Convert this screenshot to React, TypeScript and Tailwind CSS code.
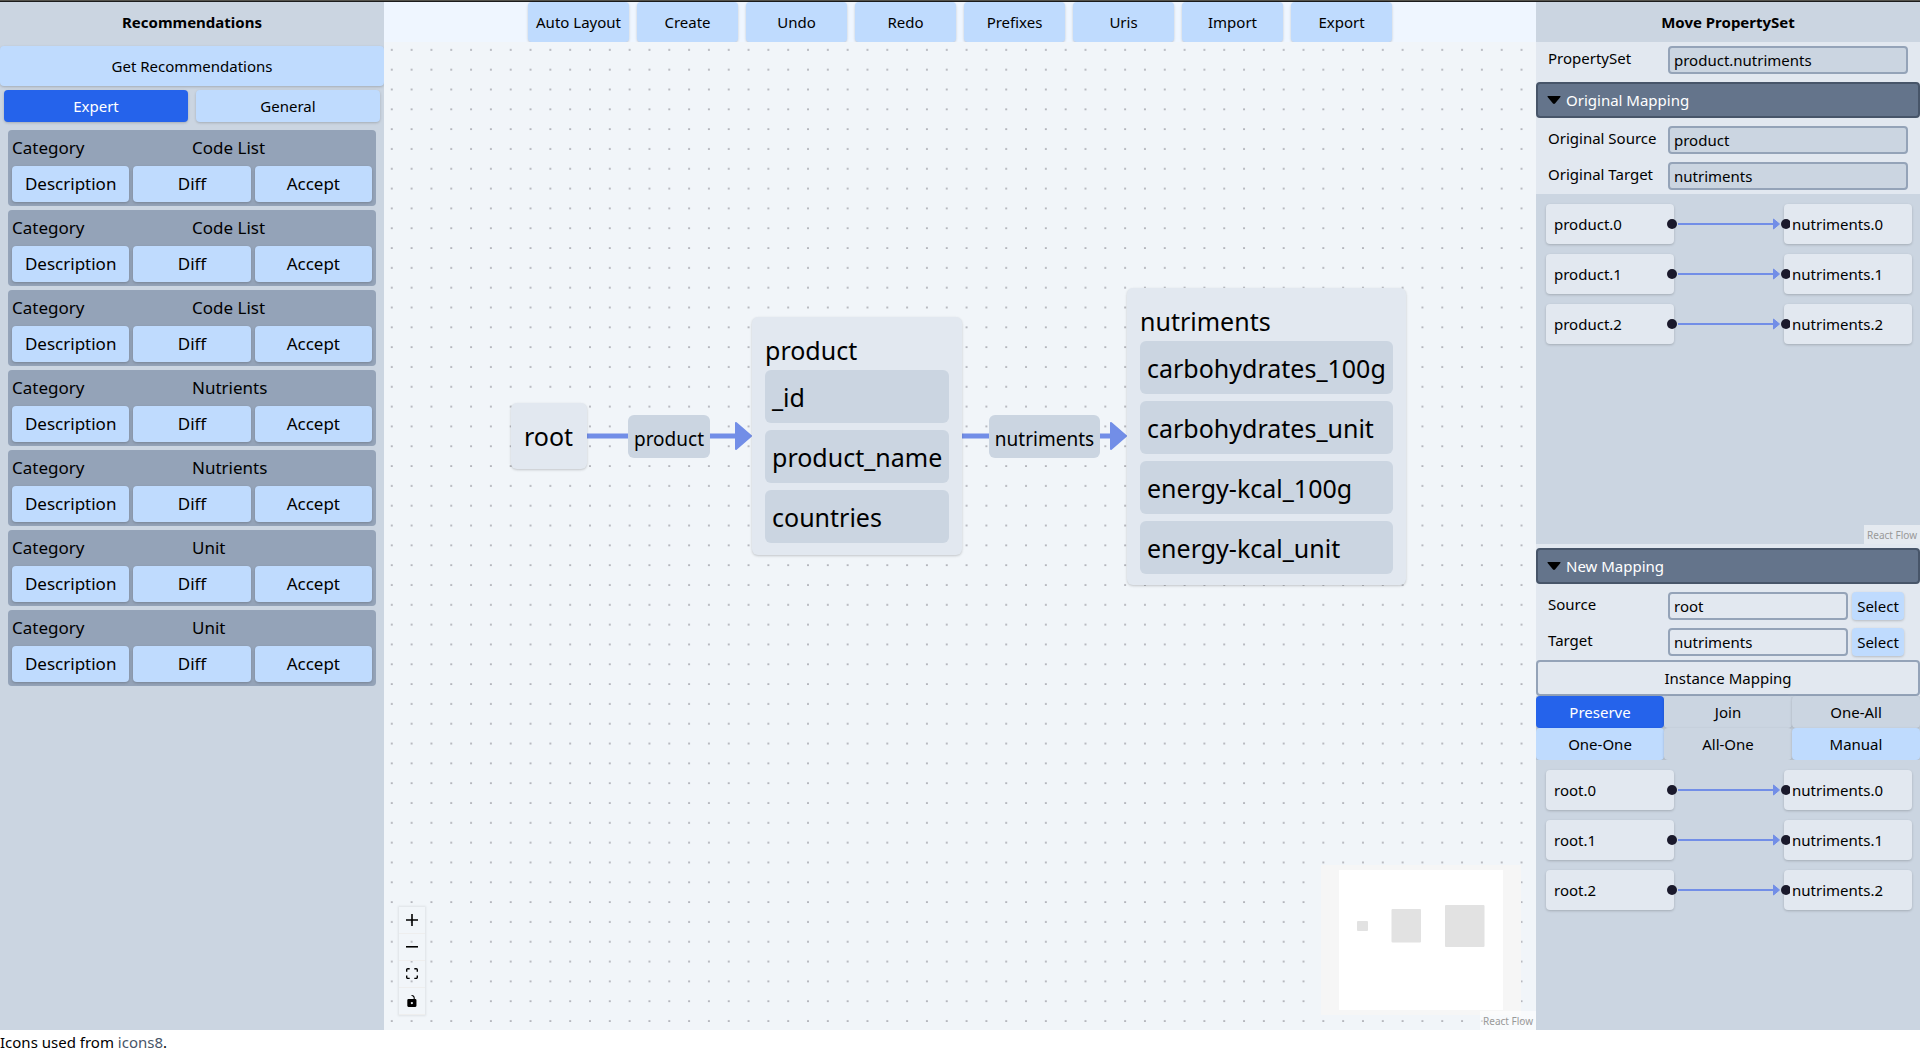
import React, { useState } from "react";

const shadow = "shadow-[0_1px_3px_rgba(0,0,0,0.12),0_1px_2px_rgba(0,0,0,0.08)]";

function SideRecommendations() {
  const [tab, setTab] = useState("Expert");
  const items = ["Code List", "Code List", "Code List", "Nutrients", "Nutrients", "Unit", "Unit"];
  return (
    <aside className="flex w-1/5 flex-col bg-[#cbd5e1]">
      <h2 className="flex h-10 items-center justify-center font-bold">Recommendations</h2>
      <button className={`mt-1 h-10 rounded bg-[#bfdbfe] ${shadow}`}>Get Recommendations</button>
      <div className="mt-1 grid grid-cols-2 gap-2 px-1">
        {["Expert", "General"].map((t) => (
          <button
            key={t}
            onClick={() => setTab(t)}
            className={`h-8 rounded ${shadow} ${tab === t ? "bg-[#2563eb] text-white" : "bg-[#bfdbfe]"}`}
          >
            {t}
          </button>
        ))}
      </div>
      <ul className="mt-2 flex flex-col gap-1 px-2 text-[17px]">
        {items.map((value, i) => (
          <li key={i} className="rounded bg-[#94a3b8] p-1">
            <div className="mb-1 grid h-7 grid-cols-2 items-center">
              <span>Category</span>
              <span>{value}</span>
            </div>
            <div className="grid grid-cols-3 gap-1">
              {["Description", "Diff", "Accept"].map((b) => (
                <button key={b} className={`h-9 rounded bg-[#bfdbfe] ${shadow}`}>
                  {b}
                </button>
              ))}
            </div>
          </li>
        ))}
      </ul>
    </aside>
  );
}

function EntityNode({ place, title, fields }: { place: string; title: string; fields: string[] }) {
  return (
    <div className={`absolute rounded-md bg-[#e2e8f0] text-[25px] whitespace-nowrap ${shadow} ${place}`}>
      <div className="flex h-[40px] items-center">{title}</div>
      {fields.length > 0 && (
        <div className="flex flex-col gap-[7px]">
          {fields.map((f) => (
            <div key={f} className="flex h-[53px] items-center rounded-md bg-[#cbd5e1] px-[7px]">
              {f}
            </div>
          ))}
        </div>
      )}
    </div>
  );
}

function EdgeLabel({ place, text }: { place: string; text: string }) {
  return (
    <div
      className={`absolute top-[373px] flex h-[43px] items-center justify-center rounded-md bg-[#cbd5e1] pt-1 text-[19px] ${place}`}
    >
      {text}
    </div>
  );
}

function Attribution({ tone }: { tone: string }) {
  return (
    <a href="#react-flow" className={`absolute right-0 bottom-0 flex h-[19px] items-center px-[3px] text-[10px] text-[#999] ${tone}`}>
      React Flow
    </a>
  );
}

function Controls() {
  const icons = [
    {
      label: "zoom in",
      box: "0 0 32 32",
      d: "M32 18.133H18.133V32h-4.266V18.133H0v-4.266h13.867V0h4.266v13.867H32z",
    },
    { label: "zoom out", box: "0 0 32 5", d: "M0 0h32v4.2H0z" },
    {
      label: "fit view",
      box: "0 0 32 30",
      d: "M3.692 4.63c0-.53.4-.938.939-.938h5.215V0H4.708C2.13 0 0 2.054 0 4.63v5.216h3.692V4.631zM27.354 0h-5.2v3.692h5.17c.53 0 .984.4.984.939v5.215H32V4.631A4.624 4.624 0 0027.354 0zm.954 24.83c0 .532-.4.94-.939.94h-5.215v3.768h5.215c2.577 0 4.631-2.13 4.631-4.707v-5.139h-3.692v5.139zm-23.677.94c-.531 0-.939-.4-.939-.94v-5.138H0v5.139c0 2.577 2.13 4.707 4.708 4.707h5.138V25.77H4.631z",
    },
    {
      label: "toggle interactivity",
      box: "0 0 25 32",
      d: "M21.333 10.667H19.81V7.619C19.81 3.429 16.38 0 12.19 0c-4.114 1.828-1.37 2.133.305 2.438 1.676.305 4.42 2.59 4.42 5.181v3.048H3.047A3.056 3.056 0 000 13.714v15.238A3.056 3.056 0 003.048 32h18.285a3.056 3.056 0 003.048-3.048V13.714a3.056 3.056 0 00-3.048-3.047zM12.19 24.533a3.056 3.056 0 01-3.047-3.047 3.056 3.056 0 013.047-3.048 3.056 3.056 0 013.048 3.048 3.056 3.056 0 01-3.048 3.047z",
    },
  ];
  return (
    <div className="absolute bottom-[15px] left-[15px] flex w-[26px] flex-col shadow-[0_0_2px_1px_rgba(0,0,0,0.08)]">
      {icons.map((ic) => (
        <button
          key={ic.label}
          aria-label={ic.label}
          className="flex h-[27px] items-center justify-center border-b border-[#eee]"
        >
          <svg viewBox={ic.box} className="max-h-3 w-3">
            <path d={ic.d} />
          </svg>
        </button>
      ))}
    </div>
  );
}

function Graph() {
  return (
    <div className="relative flex-1 overflow-hidden bg-[#f1f5f9]">
      <svg className="absolute inset-0 h-full w-full">
        <pattern id="dots" x="6.8" y="6.8" width="19.82" height="19.82" patternUnits="userSpaceOnUse">
          <circle cx="1" cy="1" r="0.85" fill="#81818a" />
        </pattern>
        <rect width="100%" height="100%" fill="url(#dots)" />
        <g stroke="#728ee7" strokeWidth="5" fill="#728ee7">
          <path d="M203 394H356M578 394H732" />
          <path d="M352 381V407L367 394ZM727 381V407L742 394Z" strokeWidth="2" strokeLinejoin="round" />
        </g>
      </svg>
      <EntityNode place="left-[127px] top-[361px] h-[66px] w-[76px] px-[13px] pt-[13px]" title="root" fields={[]} />
      <EntityNode
        place="left-[368px] top-[275px] h-[238px] w-[210px] px-[13px] pt-[13px]"
        title="product"
        fields={["_id", "product_name", "countries"]}
      />
      <EntityNode
        place="left-[743px] top-[246px] h-[297px] w-[279px] px-[13px] pt-[13px]"
        title="nutriments"
        fields={["carbohydrates_100g", "carbohydrates_unit", "energy-kcal_100g", "energy-kcal_unit"]}
      />
      <EdgeLabel place="left-[244px] w-[82px]" text="product" />
      <EdgeLabel place="left-[605px] w-[111px]" text="nutriments" />
      <Controls />
      <svg className="absolute right-[15px] bottom-[15px] h-[150px] w-[200px] bg-[#f6f6f6]">
        <rect x="18" y="5" width="164" height="140" fill="#fff" />
        <g fill="#e2e2e2">
          <rect x="36" y="56" width="11" height="10" rx="1" />
          <rect x="70.5" y="44" width="29.5" height="33.5" rx="1" />
          <rect x="124" y="40" width="39.5" height="42" rx="1" />
        </g>
      </svg>
      <Attribution tone="bg-white/50" />
    </div>
  );
}

function Field({ label, value, editable }: { label: string; value: string; editable?: boolean }) {
  const id = label.replace(" ", "-");
  return (
    <div className="flex items-start px-3">
      <label htmlFor={id} className="w-[120px] shrink-0">
        {label}
      </label>
      <input
        id={id}
        readOnly
        defaultValue={value}
        className={`h-7 min-w-0 flex-1 rounded border-2 border-[#94a3b8] px-1 ${editable ? "bg-[#e2e8f0]" : "bg-[#cbd5e1]"}`}
      />
      {editable && <button className={`mr-1 ml-1 h-7 w-[52px] rounded bg-[#bfdbfe] ${shadow}`}>Select</button>}
    </div>
  );
}

function SectionHeader({ title }: { title: string }) {
  return (
    <button className="flex h-9 w-full items-center rounded border-2 border-[#475569] bg-[#64748b] pl-[9px] text-white">
      <svg viewBox="0 0 14 8" className="mr-[5px] h-2 w-[14px]">
        <path d="M1 0H13Q14 0 13.400 1L8 7.500Q7 8.300 6 7.500L.6 1Q0 0 1 0Z" fill="#000" />
      </svg>
      {title}
    </button>
  );
}

function InstanceFlow({ from, to }: { from: string; to: string }) {
  return (
    <div className="flex flex-col gap-[10px] pt-[10px] pr-2 pl-[10px]">
      {[0, 1, 2].map((n) => (
        <div key={n} className="relative flex h-10 items-center">
          <div className={`flex h-10 w-32 items-center rounded bg-[#e2e8f0] px-2 ${shadow}`}>{`${from}.${n}`}</div>
          <div className="flex-1" />
          <div className={`flex h-10 w-32 items-center rounded bg-[#e2e8f0] px-2 ${shadow}`}>{`${to}.${n}`}</div>
          <svg viewBox="0 0 124 12" className="absolute left-[120px] h-3 w-[124px]">
            <path d="M12 6H110" stroke="#728ee7" strokeWidth="2" />
            <path d="M107.500 1V11L113.500 6Z" fill="#728ee7" stroke="#728ee7" strokeLinejoin="round" />
            <circle cx="6" cy="6" r="5" fill="#1a192b" />
            <circle cx="120" cy="6" r="5" fill="#1a192b" />
          </svg>
        </div>
      ))}
    </div>
  );
}

function SideMapping() {
  const modes = [
    { name: "Preserve", tone: "bg-[#2563eb] text-white" },
    { name: "Join", tone: "bg-[#cbd5e1]" },
    { name: "One-All", tone: "bg-[#cbd5e1]" },
    { name: "One-One", tone: "bg-[#bfdbfe]" },
    { name: "All-One", tone: "bg-[#cbd5e1]" },
    { name: "Manual", tone: "bg-[#bfdbfe]" },
  ];
  return (
    <aside className="flex w-1/5 flex-col bg-[#e2e8f0]">
      <h2 className="flex h-10 items-center justify-center bg-[#cbd5e1] font-bold">Move PropertySet</h2>
      <div className="pt-1 pb-2">
        <Field label="PropertySet" value="product.nutriments" />
      </div>
      <SectionHeader title="Original Mapping" />
      <div className="flex flex-col gap-2 pt-2 pb-1">
        <Field label="Original Source" value="product" />
        <Field label="Original Target" value="nutriments" />
      </div>
      <div className="relative mb-1 h-[350px] bg-[#cbd5e1]">
        <InstanceFlow from="product" to="nutriments" />
        <Attribution tone="bg-white/50" />
      </div>
      <SectionHeader title="New Mapping" />
      <div className="flex flex-col gap-2 pt-2 pb-1">
        <Field label="Source" value="root" editable />
        <Field label="Target" value="nutriments" editable />
      </div>
      <button className="h-9 rounded border-2 border-[#94a3b8]">Instance Mapping</button>
      <div className="grid grid-cols-3 bg-[#cbd5e1]">
        {modes.map((m) => (
          <button key={m.name} className={`h-8 rounded ${shadow} ${m.tone}`}>
            {m.name}
          </button>
        ))}
      </div>
      <div className="flex-1 bg-[#cbd5e1]">
        <InstanceFlow from="root" to="nutriments" />
      </div>
    </aside>
  );
}

export default function App() {
  const actions = ["Auto Layout", "Create", "Undo", "Redo", "Prefixes", "Uris", "Import", "Export"];
  return (
    <div className="flex min-h-screen flex-col border-t border-[#55534c] bg-white font-['Noto_Sans',sans-serif] text-[15px] leading-6 text-black">
      <div className="flex flex-1 border-t border-[#1c1c1c]">
        <SideRecommendations />
        <main className="flex w-3/5 flex-col">
          <nav className="flex h-10 justify-center bg-[#eff6ff]">
            <div className="grid w-3/4 grid-cols-8 gap-2">
              {actions.map((a) => (
                <button key={a} className={`rounded bg-[#bfdbfe] whitespace-nowrap ${shadow}`}>
                  {a}
                </button>
              ))}
            </div>
          </nav>
          <Graph />
        </main>
        <SideMapping />
      </div>
      <footer className="h-6">
        Icons used from{" "}
        <a href="https://icons8.com" className="text-[#475569]">
          icons8
        </a>
        .
      </footer>
    </div>
  );
}
